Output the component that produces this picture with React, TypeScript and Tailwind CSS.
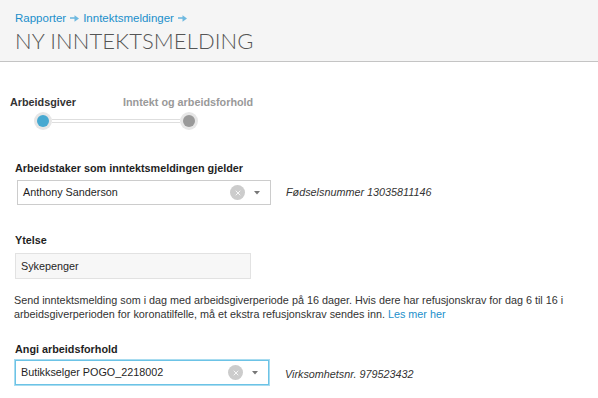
import { X } from "lucide-react";

const Arrow = () => (
  <svg className="mx-[4px] mt-[1px]" width="9" height="7" viewBox="0 0 9 7">
    <path d="M0 3h5.5" stroke="#6fb9e0" strokeWidth="1.6" />
    <path d="M4.5 0.2L9 3.5 4.5 6.8z" fill="#6fb9e0" />
  </svg>
);

const SelectBox = ({ value, focused }: { value: string; focused?: boolean }) => (
  <div
    className={`flex h-[25px] w-[254px] items-center justify-between border bg-white pl-[5px] pr-[10px] ${
      focused ? "border-[#6cc3e6] shadow-[0_0_0_1px_#a8dcf0]" : "border-[#cccccc]"
    }`}
  >
    <span className="text-[10.8px] text-[#1f1f1f]">{value}</span>
    <div className="flex items-center gap-[9px]">
      <span className="flex h-[15px] w-[15px] items-center justify-center rounded-full bg-[#cccccc]">
        <X className="h-[8px] w-[8px] text-white" strokeWidth={2.5} />
      </span>
      <svg width="6" height="4" viewBox="0 0 6 4">
        <path d="M0 0h6L3 3.5z" fill="#777" />
      </svg>
    </div>
  </div>
);

export default function App() {
  return (
    <div className="min-h-[398px] bg-white font-['Liberation_Sans',Arial,sans-serif] text-[10.8px] text-[#333]">
      <div className="h-[62px] border-b-[1.5px] border-[#c4c4c4] bg-[#f5f5f5] px-[15px] pt-[10px]">
        <div className="flex items-center text-[11.5px] leading-[16px] text-[#1b8fcb]">
          <span>Rapporter</span>
          <Arrow />
          <span>Inntektsmeldinger</span>
          <Arrow />
        </div>
        <h1 className="mt-[1px] font-['Lato',sans-serif] text-[22px] font-light leading-[28px] tracking-[0.1px] text-[#555]">
          NY INNTEKTSMELDING
        </h1>
      </div>

      <div className="px-[10px] pt-[33px]">
        <div className="flex gap-[47px] text-[10.8px] font-bold leading-[14px]">
          <span className="text-[#333]">Arbeidsgiver</span>
          <span className="text-[#999]">Inntekt og arbeidsforhold</span>
        </div>
        <div className="ml-[24px] mt-[3px] flex w-[164px] items-center">
          <span className="flex h-[18px] w-[18px] items-center justify-center rounded-full bg-[#e6e6e6]">
            <span className="h-[12px] w-[12px] rounded-full bg-[#47a9d1]" />
          </span>
          <span className="h-[4px] flex-1 border-y border-[#dedede] bg-white" />
          <span className="flex h-[18px] w-[18px] items-center justify-center rounded-full bg-[#e6e6e6]">
            <span className="h-[12px] w-[12px] rounded-full bg-[#999]" />
          </span>
        </div>
      </div>

      <div className="px-[15px] pt-[31px]">
        <div className="mb-[5px] text-[10.8px] font-bold leading-[14px] text-[#1f1f1f]">
          Arbeidstaker som inntektsmeldingen gjelder
        </div>
        <div className="ml-[2px] flex items-center gap-[15px]">
          <SelectBox value="Anthony Sanderson" />
          <span className="italic text-[#333]">Fødselsnummer 13035811146</span>
        </div>

        <div className="mb-[6px] mt-[28px] text-[10.8px] font-bold leading-[14px] text-[#1f1f1f]">
          Ytelse
        </div>
        <div className="flex h-[26px] w-[236px] items-center border border-[#e2e2e2] bg-[#f7f7f7] px-[5px] text-[10.8px] text-[#1f1f1f]">
          Sykepenger
        </div>

        <p className="mt-[14px] -ml-[1px] text-[10.8px] leading-[14px] text-[#333]">
          Send inntektsmelding som i dag med arbeidsgiverperiode på 16 dager. Hvis dere har refusjonskrav for dag 6 til 16 i
          <br />
          arbeidsgiverperioden for koronatilfelle, må et ekstra refusjonskrav sendes inn.{" "}
          <span className="text-[#1b8fcb]">Les mer her</span>
        </p>

        <div className="mb-[4px] mt-[21px] text-[10.8px] font-bold leading-[14px] text-[#1f1f1f]">
          Angi arbeidsforhold
        </div>
        <div className="flex items-center gap-[16px]">
          <SelectBox value="Butikkselger POGO_2218002" focused />
          <span className="mt-[3px] italic text-[#333]">Virksomhetsnr. 979523432</span>
        </div>
      </div>
    </div>
  );
}
